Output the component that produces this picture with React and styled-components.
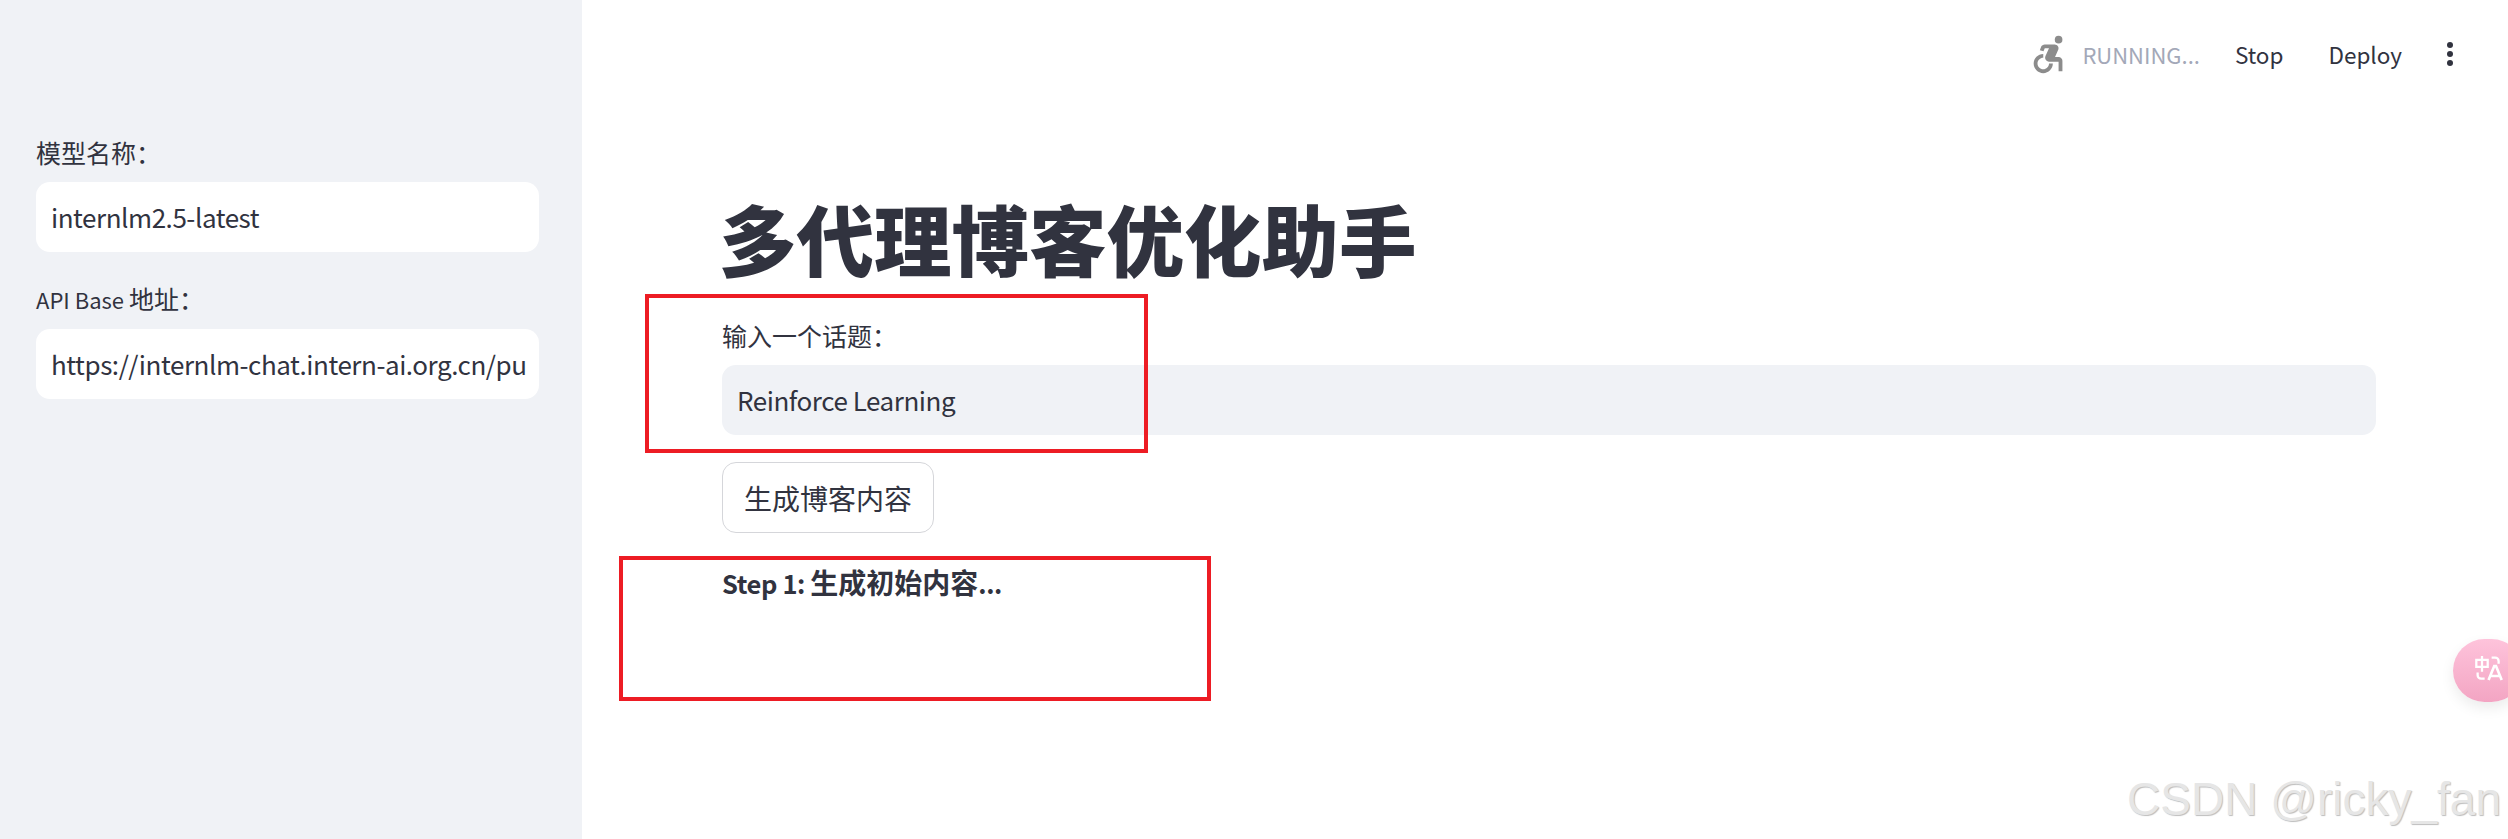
import styled, { createGlobalStyle } from "styled-components";
import { MdAccessibleForward } from "react-icons/md";

const GlobalStyle = createGlobalStyle`
  html, body {
    margin: 0;
    height: 100%;
    overflow: hidden;
    background: #fff;
  }
  body {
    font-family: "Noto Sans CJK SC", "Noto Sans", sans-serif;
    color: #31333f;
  }
`;

const Page = styled.div`
  position: relative;
  display: flex;
  width: 2508px;
  height: 839px;
  overflow: hidden;
`;

const Sidebar = styled.aside`
  flex: 0 0 582px;
  min-width: 0;
  box-sizing: border-box;
  padding: 134px 43px 0 36px;
  background: #f0f2f6;
`;

const Content = styled.div`
  flex: 1;
  min-width: 0;
  display: flex;
  flex-direction: column;
`;

const Toolbar = styled.header`
  display: flex;
  align-items: center;
  justify-content: flex-end;
  height: 108px;
  padding-right: 55px;
  font-size: 22.5px;
`;

const StatusIcon = styled(MdAccessibleForward)`
  width: 46px;
  height: 46px;
  color: #8c8c8c;
  margin-right: 10px;
`;

const RunningText = styled.span`
  color: #a3a8b8;
  font-size: 22px;
  margin-right: 35px;
`;

const ToolbarLink = styled.span`
  margin-right: ${(props) => props.$gap}px;
`;

const Kebab = styled.span`
  display: flex;
  flex-direction: column;
  gap: 3px;
  span {
    width: 6px;
    height: 6px;
    border-radius: 50%;
    background: #31333f;
  }
`;

const Main = styled.main`
  width: 1654px;
  margin-left: 140px;
`;

const Title = styled.h1`
  margin: 74px 0 25px -3px;
  font-size: 77.5px;
  line-height: 110px;
  font-weight: 900;
`;

const Field = styled.div`
  margin-bottom: ${(props) => props.$mb || 0}px;
`;

const Label = styled.div`
  font-size: 25px;
  line-height: 36px;
  margin-bottom: 12px;
  white-space: nowrap;
`;

const LatinRun = styled.span`
  font-size: 22px;
`;

const TextBox = styled.div`
  box-sizing: border-box;
  height: 70px;
  padding: 0 15px 2px;
  display: flex;
  align-items: center;
  border-radius: 14px;
  background: ${(props) => (props.$filled ? "#f0f2f6" : "#fff")};
  font-size: 26px;
  letter-spacing: -0.45px;
  white-space: nowrap;
  overflow: hidden;
`;

const Button = styled.button`
  display: block;
  box-sizing: border-box;
  width: 212px;
  height: 71px;
  margin-top: 27px;
  padding: 0;
  border: 1px solid #d5d6da;
  border-radius: 14px;
  background: #fff;
  color: #31333f;
  font: inherit;
  font-size: 28px;
`;

const StepText = styled.p`
  margin: 30px 0 0;
  font-size: 28px;
  line-height: 38px;
  font-weight: 700;
`;

const StepLatin = styled.span`
  font-size: 25.5px;
  letter-spacing: -0.4px;
`;

const Highlight = styled.div`
  position: absolute;
  left: ${(props) => props.$x}px;
  top: ${(props) => props.$y}px;
  width: ${(props) => props.$w}px;
  height: ${(props) => props.$h}px;
  box-sizing: border-box;
  border: 4px solid #ed1c24;
`;

const TranslatePill = styled.div`
  position: absolute;
  left: 2453px;
  top: 639px;
  width: 70px;
  height: 63px;
  border-radius: 32px;
  background: linear-gradient(180deg, #fec3db 0%, #f3a5c3 100%);
  box-shadow: 0 6px 14px rgba(0, 0, 0, 0.08);
  svg {
    display: block;
    margin: 16px 0 0 22px;
  }
`;

const Watermark = styled.div`
  position: absolute;
  right: 7px;
  top: 771px;
  font-family: "Liberation Sans", Arial, sans-serif;
  font-size: 46px;
  line-height: 56px;
  color: #e6e6e6;
  text-shadow: 1px 1px 1px #bdbdbd;
  white-space: nowrap;
`;

function TranslateIcon() {
  return (
    <svg width="28" height="28" viewBox="0 0 32 32" fill="none" stroke="#fff" strokeWidth="2.6">
      <path d="M1.5 5.5h13v8h-13zM8 1v18" />
      <path d="M19 3h4a4 4 0 0 1 4 4v3" />
      <path d="M3 20v3a4 4 0 0 0 4 4h4" />
      <path d="M15.5 28.5 22 12.5h2l6.5 16M18 24h10" strokeWidth="3" />
    </svg>
  );
}

export default function App() {
  return (
    <Page>
      <GlobalStyle />
      <Sidebar>
        <Field $mb={28}>
          <Label>模型名称：</Label>
          <TextBox>internlm2.5-latest</TextBox>
        </Field>
        <Field>
          <Label>
            <LatinRun>API Base </LatinRun>地址：
          </Label>
          <TextBox>https://internlm-chat.intern-ai.org.cn/pu</TextBox>
        </Field>
      </Sidebar>
      <Content>
        <Toolbar>
          <StatusIcon />
          <RunningText>RUNNING...</RunningText>
          <ToolbarLink $gap={45}>Stop</ToolbarLink>
          <ToolbarLink $gap={45}>Deploy</ToolbarLink>
          <Kebab>
            <span />
            <span />
            <span />
          </Kebab>
        </Toolbar>
        <Main>
          <Title>多代理博客优化助手</Title>
          <Field>
            <Label>输入一个话题：</Label>
            <TextBox $filled>Reinforce Learning</TextBox>
          </Field>
          <Button>生成博客内容</Button>
          <StepText>
            <StepLatin>Step 1: </StepLatin>生成初始内容<StepLatin>...</StepLatin>
          </StepText>
        </Main>
      </Content>
      <Highlight $x={645} $y={294} $w={503} $h={159} />
      <Highlight $x={619} $y={556} $w={592} $h={145} />
      <TranslatePill>
        <TranslateIcon />
      </TranslatePill>
      <Watermark>CSDN @ricky_fan</Watermark>
    </Page>
  );
}
